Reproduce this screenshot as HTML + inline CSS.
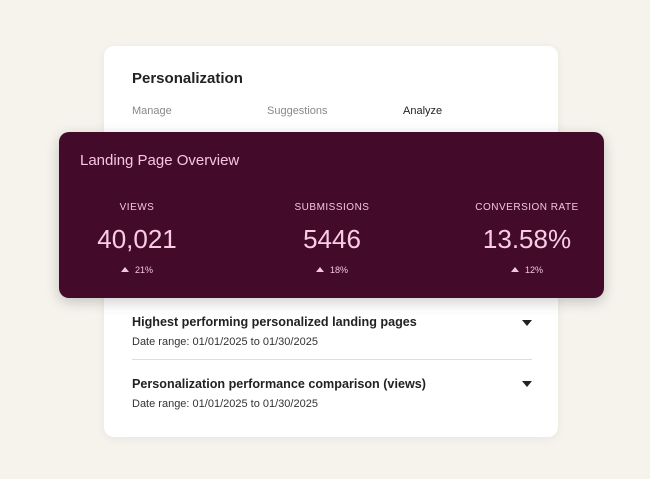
<!DOCTYPE html>
<html><head><style>
body{margin:0;width:650px;height:479px;background:#f6f3ed;font-family:"Liberation Sans",sans-serif;position:relative;overflow:hidden}
.card{position:absolute;left:104px;top:46px;width:454px;height:391px;background:#fff;border-radius:10px;box-shadow:0 2px 10px rgba(0,0,0,0.06)}
.t{position:absolute;white-space:nowrap}
.dark{position:absolute;left:59px;top:132px;width:545px;height:166px;background:#440a2a;border-radius:10px;box-shadow:0 4px 14px rgba(0,0,0,0.2)}
.lab{position:absolute;font-size:10px;letter-spacing:0.5px;color:#f0c6dc;text-align:center;width:160px}
.num{position:absolute;font-size:26px;color:#f8cde4;text-align:center;width:160px}
.pct{position:absolute;font-size:9px;color:#f0c6dc;text-align:center;width:160px}
.tri{display:inline-block;width:0;height:0;border-left:4px solid transparent;border-right:4px solid transparent;border-bottom:5px solid #f0c6dc;margin-right:6px;vertical-align:1px}
.dd{position:absolute;width:0;height:0;border-left:5px solid transparent;border-right:5px solid transparent;border-top:6px solid #222}
</style></head><body>
<div class="card">
<div class="t" style="left:28px;top:24px;font-size:15px;color:#222;font-weight:bold;-webkit-text-stroke:0">Personalization</div>
<div class="t" style="left:28px;top:59px;font-size:11px;color:#888">Manage</div>
<div class="t" style="left:163px;top:59px;font-size:11px;color:#888">Suggestions</div>
<div class="t" style="left:299px;top:59px;font-size:11px;color:#222">Analyze</div>
<div class="t" style="left:28px;top:269px;font-size:12.6px;font-weight:bold;color:#222">Highest performing personalized landing pages</div>
<div class="t" style="left:28px;top:290px;font-size:11px;color:#333">Date range: 01/01/2025 to 01/30/2025</div>
<div class="dd" style="left:418px;top:274px"></div>
<div style="position:absolute;left:28px;top:313px;width:400px;height:1px;background:#ddd"></div>
<div class="t" style="left:28px;top:331px;font-size:12.6px;font-weight:bold;color:#222">Personalization performance comparison (views)</div>
<div class="t" style="left:28px;top:352px;font-size:11px;color:#333">Date range: 01/01/2025 to 01/30/2025</div>
<div class="dd" style="left:418px;top:335px"></div>
</div>
<div class="dark">
<div class="t" style="left:21px;top:20px;font-size:15px;color:#f5c6e0">Landing Page Overview</div>
<div class="lab" style="left:-2px;top:70px">VIEWS</div>
<div class="lab" style="left:193px;top:70px">SUBMISSIONS</div>
<div class="lab" style="left:388px;top:70px">CONVERSION RATE</div>
<div class="num" style="left:-2px;top:92px">40,021</div>
<div class="num" style="left:193px;top:92px">5446</div>
<div class="num" style="left:388px;top:92px">13.58%</div>
<div class="pct" style="left:-2px;top:133px"><span class="tri"></span>21%</div>
<div class="pct" style="left:193px;top:133px"><span class="tri"></span>18%</div>
<div class="pct" style="left:388px;top:133px"><span class="tri"></span>12%</div>
</div>
</body></html>
